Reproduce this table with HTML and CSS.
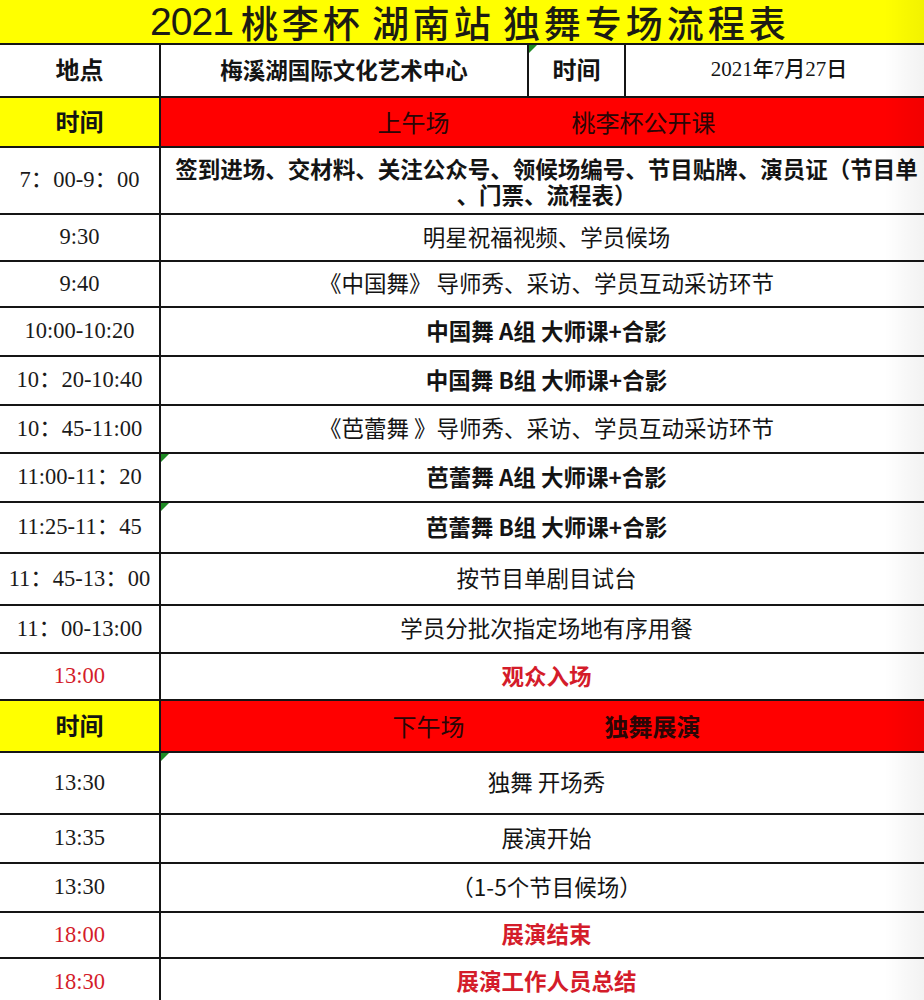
FILE: index.html
```html
<!DOCTYPE html>
<html lang="zh-CN">
<head>
<meta charset="utf-8">
<title>2021 桃李杯 湖南站 独舞专场流程表</title>
<link rel="stylesheet" href="styles.css">
</head>
<body>
<div class="sheet">
  <div class="row h43">
    <div class="cell title span-all"><span class="num">2021</span><span class="word">桃李杯</span><span class="word">湖南站</span><span class="word">独舞专场流程表</span></div>
  </div>

  <div class="row h51">
    <div class="cell label">地点</div>
    <div class="cell venue">梅溪湖国际文化艺术中心</div>
    <div class="cell label mark">时间</div>
    <div class="cell date">2021年7月27日</div>
  </div>

  <div class="row h48">
    <div class="cell label yellow">时间</div>
    <div class="cell span-3 red session"><span>上午场</span><span>桃李杯公开课</span></div>
  </div>

  <div class="row h65">
    <div class="cell time">7：00-9：00</div>
    <div class="cell span-3 text bold two-line"><span class="line">签到进场、交材料、关注公众号、领候场编号、节目贴牌、演员证（节目单</span><span class="line">、门票、流程表）</span></div>
  </div>

  <div class="row h45">
    <div class="cell time">9:30</div>
    <div class="cell span-3 text">明星祝福视频、学员候场</div>
  </div>

  <div class="row h44">
    <div class="cell time">9:40</div>
    <div class="cell span-3 text">《中国舞》 导师秀、采访、学员互动采访环节</div>
  </div>

  <div class="row h47">
    <div class="cell time">10:00-10:20</div>
    <div class="cell span-3 text bold">中国舞 A组 大师课+合影</div>
  </div>

  <div class="row h47">
    <div class="cell time">10：20-10:40</div>
    <div class="cell span-3 text bold">中国舞 B组 大师课+合影</div>
  </div>

  <div class="row h46">
    <div class="cell time">10：45-11:00</div>
    <div class="cell span-3 text">《芭蕾舞 》导师秀、采访、学员互动采访环节</div>
  </div>

  <div class="row h47">
    <div class="cell time">11:00-11：20</div>
    <div class="cell span-3 text bold mark">芭蕾舞 A组 大师课+合影</div>
  </div>

  <div class="row h49">
    <div class="cell time">11:25-11：45</div>
    <div class="cell span-3 text bold mark">芭蕾舞 B组 大师课+合影</div>
  </div>

  <div class="row h50">
    <div class="cell time">11：45-13：00</div>
    <div class="cell span-3 text">按节目单剧目试台</div>
  </div>

  <div class="row h46">
    <div class="cell time">11：00-13:00</div>
    <div class="cell span-3 text">学员分批次指定场地有序用餐</div>
  </div>

  <div class="row h45">
    <div class="cell time alert">13:00</div>
    <div class="cell span-3 text bold alert">观众入场</div>
  </div>

  <div class="row h50">
    <div class="cell label yellow">时间</div>
    <div class="cell span-3 red session pm"><span>下午场</span><span class="bold">独舞展演</span></div>
  </div>

  <div class="row h60">
    <div class="cell time">13:30</div>
    <div class="cell span-3 text mark">独舞 开场秀</div>
  </div>

  <div class="row h47">
    <div class="cell time">13:35</div>
    <div class="cell span-3 text">展演开始</div>
  </div>

  <div class="row h47">
    <div class="cell time">13:30</div>
    <div class="cell span-3 text">（1-5个节目候场）</div>
  </div>

  <div class="row h44">
    <div class="cell time alert">18:00</div>
    <div class="cell span-3 text bold alert">展演结束</div>
  </div>

  <div class="row h46">
    <div class="cell time alert">18:30</div>
    <div class="cell span-3 text bold alert">展演工作人员总结</div>
  </div>
</div>
</body>
</html>
```

FILE: styles.css
```css
html, body {
  margin: 0;
  padding: 0;
  background: #ffffff;
}

body {
  width: 924px;
  height: 1000px;
  overflow: hidden;
  font-family: "Noto Sans CJK SC", "Noto Sans", sans-serif;
  color: #141414;
}

.sheet {
  position: relative;
  width: 932px;
  display: flex;
  flex-direction: column;
  gap: 2px;
  background: #151515;
}

.sheet::after {
  content: "";
  position: absolute;
  top: 0;
  right: 8px;
  width: 40px;
  height: 100%;
  background: linear-gradient(to right, rgba(0, 0, 0, 0), rgba(0, 0, 0, 0.05));
  pointer-events: none;
}

.row {
  display: grid;
  grid-template-columns: 159px 366px 95px 1fr;
  gap: 2px;
}

.h43 { height: 43px; }
.h44 { height: 44px; }
.h45 { height: 45px; }
.h46 { height: 46px; }
.h47 { height: 47px; }
.h48 { height: 48px; }
.h49 { height: 49px; }
.h50 { height: 50px; }
.h51 { height: 51px; }
.h60 { height: 60px; }
.h65 { height: 65px; }

.cell {
  position: relative;
  display: flex;
  align-items: center;
  justify-content: center;
  text-align: center;
  background: #ffffff;
  font-size: 22.5px;
  line-height: 1.2;
  white-space: nowrap;
  box-sizing: border-box;
}

.span-all { grid-column: 1 / -1; }
.span-3 { grid-column: 2 / -1; }

.title {
  background: #ffff00;
  font-size: 37px;
  font-weight: 500;
  line-height: 40px;
  letter-spacing: 4px;
  color: #1c1c14;
  gap: 8px;
  padding-left: 8px;
}

.title .num {
  font-family: "Liberation Sans", sans-serif;
  font-size: 39px;
  font-weight: 400;
  letter-spacing: -1px;
}

.label {
  font-size: 24px;
  font-weight: 700;
  padding-bottom: 2px;
}

.venue {
  font-size: 22.5px;
  font-weight: 700;
  padding-bottom: 2px;
}

.date {
  font-family: "Liberation Serif", "Noto Sans CJK SC", serif;
  font-size: 21px;
  font-weight: 500;
  padding-bottom: 2px;
}

.yellow { background: #ffff00; }

.red { background: #ff0000; }

.session {
  gap: 122px;
  font-size: 24px;
  color: #2a0606;
}

.session.pm { gap: 140px; }

.time {
  font-family: "Liberation Serif", "Noto Sans CJK SC", serif;
  font-size: 22.5px;
  color: #1a1a1a;
  padding-bottom: 2px;
}

.text {
  font-weight: 400;
  padding-bottom: 3px;
}

.bold { font-weight: 700; }

.two-line {
  flex-direction: column;
  padding-bottom: 0;
  padding-top: 1px;
}

.two-line .line {
  display: block;
  line-height: 26px;
  height: 26px;
}

.alert { color: #d41c2a; }
.time.alert { color: #d41c2a; }

.mark::before {
  content: "";
  position: absolute;
  top: 0;
  left: 0;
  width: 0;
  height: 0;
  border-top: 8px solid #1f8a24;
  border-right: 8px solid transparent;
}
```
